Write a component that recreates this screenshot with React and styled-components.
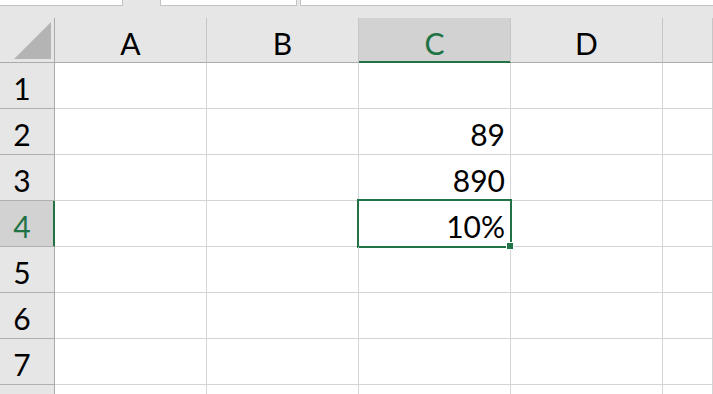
import React from "react";
import styled, { createGlobalStyle } from "styled-components";

const GREEN = "#217346";

const Global = createGlobalStyle`
  html, body { margin: 0; padding: 0; background: #fff; overflow: hidden; }
  body { font-family: Lato, "Open Sans", sans-serif; }
  * { box-sizing: border-box; }
`;

const Page = styled.div`
  width: 713px;
  height: 394px;
  overflow: hidden;
  display: flex;
  flex-direction: column;
`;

const TopBar = styled.div`
  height: 18px;
  flex: none;
  background: #e6e6e6;
  display: flex;
  align-items: flex-start;
`;

const Tab = styled.div`
  height: 6px;
  background: #fff;
  border-bottom: 1px solid #c3c3c3;
  border-left: ${(p) => (p.$left ? "1px solid #c3c3c3" : "none")};
  border-right: ${(p) => (p.$right ? "1px solid #c3c3c3" : "none")};
  width: ${(p) => (p.$w ? `${p.$w}px` : "auto")};
  flex: ${(p) => (p.$w ? "none" : "1")};
  margin-left: ${(p) => p.$ml || 0}px;
`;

const Sheet = styled.div`
  display: grid;
  grid-template-columns: 55px 152px 152px 152px 152px 1fr;
  grid-template-rows: 45px;
  grid-auto-rows: 46px;
  font-size: 30px;
  line-height: 30px;
  color: #000;
`;

const Corner = styled.div`
  background: #e6e6e6;
  border-right: 1px solid #ababab;
  border-bottom: 1px solid #ababab;
  display: flex;
  justify-content: flex-end;
  align-items: flex-end;
  padding: 0 3px 3px 0;
`;

const ColHead = styled.div`
  background: ${(p) => (p.$sel ? "#d2d2d2" : "#e6e6e6")};
  color: ${(p) => (p.$sel ? GREEN : "#000")};
  border-right: 1px solid #c6c6c6;
  border-bottom: 1px solid ${(p) => (p.$sel ? GREEN : "#ababab")};
  box-shadow: ${(p) => (p.$sel ? `inset 0 -1px 0 ${GREEN}` : "none")};
  display: flex;
  justify-content: center;
  align-items: flex-end;
  padding-bottom: 4px;
`;

const RowHead = styled.div`
  background: ${(p) => (p.$sel ? "#d2d2d2" : "#e6e6e6")};
  color: ${(p) => (p.$sel ? GREEN : "#000")};
  border-right: 1px solid ${(p) => (p.$sel ? GREEN : "#ababab")};
  border-bottom: 1px solid #b0b0b0;
  box-shadow: ${(p) => (p.$sel ? `inset -1px 0 0 ${GREEN}` : "none")};
  display: flex;
  justify-content: center;
  align-items: flex-end;
  padding: 0 10px 5px 0;
`;

const Cell = styled.div`
  position: relative;
  border-right: 1px solid #d4d4d4;
  border-bottom: 1px solid #d4d4d4;
  display: flex;
  justify-content: flex-end;
  align-items: flex-end;
  padding: 0 5px 5px 0;
`;

const Selection = styled.div`
  position: absolute;
  left: -2px;
  top: -2px;
  width: 155px;
  height: 49px;
  border: 2px solid ${GREEN};
  pointer-events: none;
`;

const FillHandle = styled.div`
  position: absolute;
  left: 147px;
  top: 41px;
  width: 8px;
  height: 8px;
  background: ${GREEN};
  border: 1px solid #fff;
  z-index: 1;
`;

const cols = ["A", "B", "C", "D", ""];
const data = { 2: "89", 3: "890", 4: "10%" };

export default function App() {
  const rows = [1, 2, 3, 4, 5, 6, 7, 8];
  return (
    <Page>
      <Global />
      <TopBar>
        <Tab $w={123} $right />
        <Tab $w={137} $left $right $ml={37} />
        <Tab $left $ml={3} />
      </TopBar>
      <Sheet>
        <Corner>
          <svg width="37" height="37" viewBox="0 0 37 37">
            <polygon points="37,0 37,37 0,37" fill="#b4b4b4" />
          </svg>
        </Corner>
        {cols.map((c, i) => (
          <ColHead key={i} $sel={c === "C"}>
            {c}
          </ColHead>
        ))}
        {rows.map((r) => (
          <React.Fragment key={r}>
            <RowHead $sel={r === 4}>{r < 8 ? r : ""}</RowHead>
            {cols.map((c, i) => (
              <Cell key={i}>
                {c === "C" && data[r]}
                {c === "C" && r === 4 && (
                  <>
                    <Selection />
                    <FillHandle />
                  </>
                )}
              </Cell>
            ))}
          </React.Fragment>
        ))}
      </Sheet>
    </Page>
  );
}
